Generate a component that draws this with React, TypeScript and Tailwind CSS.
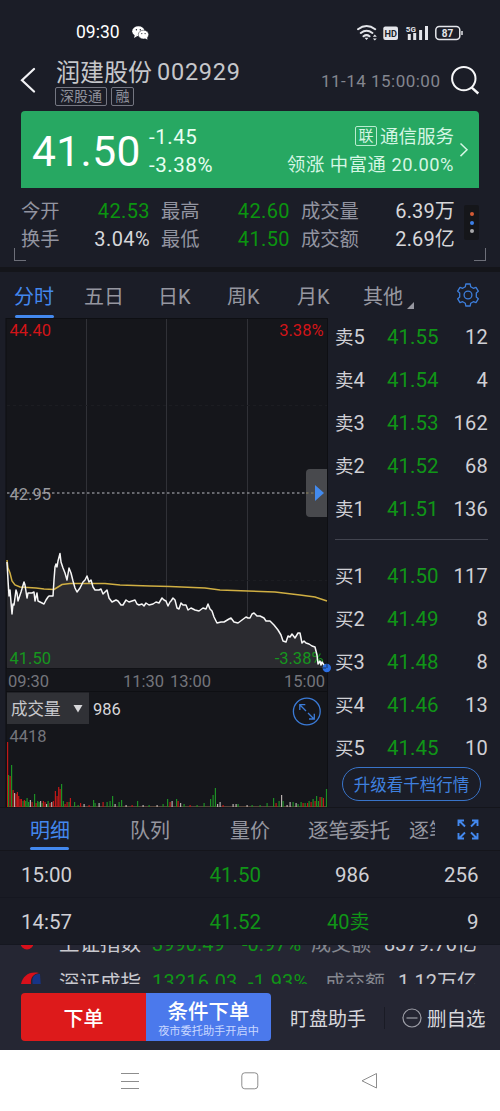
import React from "react";

const asks = [
  ["卖5", "41.55", "12"],
  ["卖4", "41.54", "4"],
  ["卖3", "41.53", "162"],
  ["卖2", "41.52", "68"],
  ["卖1", "41.51", "136"],
];
const bids = [
  ["买1", "41.50", "117"],
  ["买2", "41.49", "8"],
  ["买3", "41.48", "8"],
  ["买4", "41.46", "13"],
  ["买5", "41.45", "10"],
];

const pricePoints =
  "7,562 8,580 9,596 10,590 12,614 13,604 14,605 16,590 17,593 18,601 21,592 24,582 25,585 27,598 28,593 32,593 34,592 35,601 37,593 38,601 40,602 44,604 46,600 48,597 49,596 53,596 54,580 55,567 56,564 57,567 58,561 60,553.5 61,562 63,568 65,573 67,580 69,568 71,573 73,581 75,588 77,592 80,588 83,582 85,580 87,576 89,582 91,580 93,587 95,590 97,590 99,590 101,589 103,594 105,592 107,590 109,598 112,602 116,600 118,601 121,605 123,605 126,600 129,602 132,601 135,600 137,604 139,605 142,604 144,606 146,603 149,605 153,604 156,602 159,603 162,598 164,600 166,601 168,606 170,602 171,601 173,598 175,600 177,608 179,609 181,603 183,605 186,605 188,610 191,608 195,610 199,611 203,608 206,609 208,604 210,609 212,611 214,617 217,623 221,622 224,622 229,619 231,618 234,622 238,623 242,620 246,617 248,618 250,618 252,614 254,613 257,616 260,616 264,618 266,621 270,621 274,625 278,630 281,635 283,641 286,642 288,636 290,637 292,634 295,638 298,633 300,633 302,643 304,641 306,643 309,644 312,646 315,647 317,655 318,664 320,661 321,665 322,662 324,665 326,667 327,668";

const volPeaks: [number, number, string][] = [
  [7.5, 65, "r"], [8.5, 32, "g"], [10, 31, "r"], [11.5, 42, "g"], [13, 17, "r"], [14.5, 14, "w"], [16, 13, "r"],
  [17.3, 15, "r"], [18.6, 11, "r"], [20, 8, "r"], [21.3, 8, "r"], [23, 6, "g"], [24.3, 7, "r"], [25.6, 6, "g"],
  [27, 9, "g"], [28.5, 5, "g"], [30.3, 7, "w"], [32, 5, "r"], [34.5, 13, "g"], [36, 4, "r"], [37.6, 6, "g"],
  [39, 5, "g"], [40.5, 6, "w"], [42, 4, "g"], [43.3, 6, "r"], [45, 5, "r"], [46.5, 3, "w"], [48, 6, "g"],
  [50, 4, "r"], [51.6, 5, "w"], [53.3, 6, "r"], [55.3, 16, "r"], [57, 11, "r"], [58.6, 20, "r"], [60, 18, "r"],
  [61.5, 23, "g"], [63.3, 6, "g"], [65, 3, "r"], [67, 5, "r"], [69, 5, "g"], [70.3, 9, "r"], [74.5, 5, "g"],
  [78, 2, "g"], [80.5, 4, "r"], [84, 3, "w"], [89, 2, "r"], [93.5, 7, "g"], [95, 4, "g"], [99, 4, "w"],
  [103, 5, "r"], [107, 5, "g"], [110, 6, "g"], [112.5, 11, "g"], [115, 3, "w"], [119, 5, "g"], [121.5, 7, "g"],
  [126, 2, "w"], [132, 2, "r"], [137.5, 6, "g"], [143, 2, "w"], [149, 2, "g"], [157, 2, "w"], [163, 3, "g"],
  [167.5, 8, "g"], [170, 5, "r"], [172, 6, "w"], [176.5, 8, "g"], [178, 6, "r"], [180.5, 4, "w"], [184, 3, "g"],
  [190, 2, "r"], [197, 2, "g"], [204, 4, "g"], [210.5, 8, "g"], [213, 12, "g"], [215.3, 19, "g"], [217.5, 3, "w"],
  [220, 5, "w"], [223, 2, "r"], [233, 3, "w"], [236, 3, "w"], [238, 3, "g"], [247, 2, "w"], [252, 2, "g"],
  [260, 2, "g"], [267, 4, "g"], [273.5, 9, "g"], [276, 4, "r"], [279, 6, "g"], [281.5, 12, "w"], [283, 6, "g"],
  [287, 2, "w"], [290, 5, "w"], [293, 5, "g"], [296, 4, "w"], [298, 3, "g"], [301, 5, "g"], [303, 4, "r"],
  [305, 4, "g"], [307.5, 4, "r"], [309, 6, "g"], [311, 5, "r"], [313, 8, "g"], [315, 6, "r"], [316.5, 11, "g"],
  [318.3, 6, "g"], [320, 10, "r"], [321.7, 10, "g"], [323.3, 9, "r"], [326.4, 18, "g"],
];
const barColor: Record<string, string> = { r: "#c01818", g: "#1d8f25", w: "#b7b0ae" };

function StatusBar() {
  return (
    <div className="flex h-[50px] items-center pt-[16px] text-white">
      <span className="ml-[76px] w-[56px] text-[17.500px] leading-none">09:30</span>
      <svg className="h-[14px] w-[17px]" viewBox="0 0 17 14">
        <ellipse cx="6.4" cy="5.2" rx="6.2" ry="5" fill="#fff" />
        <path d="M2.8 8.5 2.1 12l3.2-2z" fill="#fff" />
        <ellipse cx="11.5" cy="8.6" rx="5.2" ry="4.4" fill="#fff" stroke="#1b1d27" strokeWidth=".5" />
        <path d="m13 12 2.4 1.7-.4-3z" fill="#fff" />
        <g fill="#1b1d27">
          <circle cx="4.4" cy="3.8" r=".7" /><circle cx="8.3" cy="3.8" r=".7" />
          <circle cx="9.8" cy="7.6" r=".6" /><circle cx="13.1" cy="7.6" r=".6" />
        </g>
      </svg>
      <svg className="ml-[207px] h-[18px] w-[108px]" viewBox="356 24 108 18" fill="none">
        <g stroke="#e4e5ea" strokeWidth="2" strokeLinecap="round">
          <path d="M358 29.200q8.600-6.500 17.200 0M360.800 33q5.800-4.500 11.600 0M363.500 36.300q3-2.300 6 0" />
        </g>
        <path d="m366.500 40-2-2.200h4zM374.800 34.500l2 2.300h-4zM374.800 40.500l2-2h-4z" fill="#e4e5ea" />
        <rect x="383.300" y="26.500" width="14.700" height="13.500" rx="2" fill="#e4e5ea" />
        <text x="390.700" y="36.600" fontSize="9.200" fontWeight="700" textAnchor="middle" fill="#1b1d27">HD</text>
        <text x="405.800" y="31.500" fontSize="8" fontWeight="700" fill="#e4e5ea">5G</text>
        <path d="M409.300 34V40M414.700 33V40M420.600 30V40M426.500 26V40" stroke="#e4e5ea" strokeWidth="3" />
        <rect x="435.800" y="26.500" width="24" height="13" rx="3.500" stroke="#e4e5ea" strokeWidth="1.500" />
        <path d="M462 31v4" stroke="#e4e5ea" strokeWidth="1.500" />
        <text x="447.600" y="36.600" fontSize="10" fontWeight="700" textAnchor="middle" fill="#e4e5ea">87</text>
      </svg>
    </div>
  );
}

function Header() {
  return (
    <header className="flex h-[61px] pl-[20px]">
      <svg className="mt-[17px] h-[26px] w-[16px]" viewBox="0 0 16 26" fill="none">
        <path d="M14 2 2 13.200 14 24.500" stroke="#f2f2f5" strokeWidth="2.200" strokeLinecap="round" />
      </svg>
      <div className="ml-[19px] w-[266px]">
        <div className="mt-[9px] flex h-[26px] items-center whitespace-nowrap pl-[1px] text-[24px] leading-[26px] text-[#c6c7cb]">
          <span className="w-[101px] pt-[2px]">润建股份</span>
          <span className="text-[23.500px] tracking-[0.750px]">002929</span>
        </div>
        <div className="mt-[2px] flex gap-[4px] text-[14px] leading-[17px] text-[#90929c]">
          <span className="flex h-[19px] w-[52px] items-center justify-center rounded-[2px] border border-[#747681]">深股通</span>
          <span className="flex h-[19px] w-[23px] items-center justify-center rounded-[2px] border border-[#747681]">融</span>
        </div>
      </div>
      <span className="mt-[21px] w-[130px] whitespace-nowrap text-[17px] leading-[20px] tracking-[0.480px] text-[#84868f]">11-14 15:00:00</span>
      <svg className="mt-[15px] h-[30px] w-[30px]" viewBox="0 0 30 30" fill="none" stroke="#f7f7f9">
        <circle cx="12.800" cy="13.600" r="11.700" strokeWidth="2" />
        <path d="m20.500 22.300 6.800 6.200" strokeWidth="2.400" />
      </svg>
    </header>
  );
}

function QuoteCard() {
  return (
    <section className="mx-[21px] flex h-[77px] rounded-t-[4px] bg-[#27a862] text-white">
      <span className="w-[128px] pl-[11px] pt-[16px] text-[42.500px] leading-[50px] tracking-[0.400px]">41.50</span>
      <div className="flex w-[100px] flex-col pt-[12px] text-[20.500px] leading-[28px] tracking-[0.550px] text-[#e7fff2]">
        <span>-1.45</span>
        <span>-3.38%</span>
      </div>
      <div className="flex w-[205px] flex-col items-end whitespace-nowrap pt-[12px] text-[18px] leading-[28px] text-[#d5f6e4]">
        <span className="flex h-[28px] items-center gap-[3px]">
          <i className="-mt-[2px] flex h-[20px] w-[22px] items-center justify-center rounded-[2px] border border-[#b9ecd0] text-[15px] not-italic leading-none">联</i>
          <span className="text-[18.500px]">通信服务</span>
        </span>
        <span className="text-[18.300px] tracking-[0.550px]">领涨 中富通 20.00%</span>
      </div>
      <svg className="ml-[5px] mt-[31px] h-[16px] w-[10px]" viewBox="0 0 10 16" fill="none">
        <path d="m1.500 1.500 6.500 6.300-6.500 6.300" stroke="#d5f6e4" strokeWidth="1.500" />
      </svg>
    </section>
  );
}

function Stats() {
  const rows = [
    ["今开", "42.53", "最高", "42.60", "成交量", "6.39万"],
    ["换手", "3.04%", "最低", "41.50", "成交额", "2.69亿"],
  ];
  return (
    <section className="relative flex h-[79px] pl-[21px] pt-[9px]">
      <div className="w-[434px] text-[19.300px] leading-[28px] text-[#9294a0]">
        {rows.map((r, i) => (
          <div key={r[0]} className="flex h-[28px] whitespace-nowrap">
            <span className="w-[56px] pt-[1px]">{r[0]}</span>
            <span className={`w-[73px] text-right text-[20px] tracking-[0.400px] ${i ? "text-[#d7d7da]" : "text-[#0b9410]"}`}>{r[1]}</span>
            <span className="ml-[11px] w-[56px] pt-[1px]">{r[2]}</span>
            <span className="w-[73px] text-right text-[20px] tracking-[0.400px] text-[#0b9410]">{r[3]}</span>
            <span className="ml-[11px] w-[74px] pt-[1px]">{r[4]}</span>
            <span className="w-[80px] text-right text-[20px] tracking-[0.150px] text-[#d7d7da]">{r[5]}</span>
          </div>
        ))}
      </div>
      <div className="ml-[9px] mt-[8px] flex h-[35px] w-[15px] flex-col items-center justify-center gap-[4.500px] rounded-[2px] bg-[#15161a]">
        <i className="h-[4px] w-[4px] rounded-full bg-[#d45a35]" />
        <i className="h-[4px] w-[4px] rounded-full bg-[#3c80e8]" />
        <i className="h-[4px] w-[4px] rounded-full bg-[#a8a8aa]" />
      </div>
      <i className="absolute bottom-[6px] left-[14px] h-[13px] w-[12px] border-b border-l border-[#6d6f79]" />
      <i className="absolute bottom-[6px] right-[14px] h-[13px] w-[12px] border-b border-r border-[#6d6f79]" />
    </section>
  );
}

function PeriodTabs() {
  return (
    <nav className="flex h-[51px] whitespace-nowrap border-t-[5px] border-[#14151a] pl-[14px] text-[20px] leading-[50px] text-[#9697a0]">
      <div className="flex w-[70px] flex-col justify-between text-[#4388ee]">
        <span className="h-[43px]">分时</span>
        <i className="ml-[1px] h-[3px] w-[39px] rounded-full bg-[#4388ee]" />
      </div>
      <span className="w-[74px]">五日</span>
      <span className="w-[69px]">日K</span>
      <span className="w-[70px]">周K</span>
      <span className="w-[66px]">月K</span>
      <span className="flex w-[93px]">
        其他
        <svg className="ml-[4px] mt-[30px] h-[7px] w-[7px]" viewBox="0 0 7 7"><path d="M7 0v7H0z" fill="#9697a0" /></svg>
      </span>
      <svg className="mt-[11px] h-[24px] w-[24px]" viewBox="0 0 24 24" fill="none" stroke="#3d7edb" strokeWidth="1.300" strokeLinejoin="round">
        <path d="M9.300 3.800 9.800 1h4.400l.5 2.800 2.600 1.500 2.700-1 2.300 3.900-2 1.800v4l2 1.800-2.300 3.900-2.700-1-2.600 1.500-.5 2.800H9.800l-.5-2.800-2.600-1.500-2.700 1-2.300-3.900 2-1.800v-4l-2-1.800L4 4.300l2.700 1z" />
        <circle cx="12" cy="12" r="3.900" />
      </svg>
    </nav>
  );
}

function PriceChart() {
  return (
    <svg className="block h-[489px] w-[331px]" viewBox="0 318 331 489" fill="none">
      <rect x="6" y="318" width="322" height="489" fill="#15161b" />
      <path d="M6 318V807M327.500 318V807M6 318.500H328M6 668H328M6 691.500H328" stroke="#0e0f13" />
      <path d="M86.500 319V668M166.500 319V668M247.500 319V668" stroke="#303137" />
      <path d="M7 405.500H327M7 580.500H327" stroke="#1c1d22" strokeDasharray="3 3" />
      <polygon points={`${pricePoints} 7,668`} fill="#2b2b30" />
      <path d="M7 493H306" stroke="#83848a" strokeWidth="1.300" strokeDasharray="2.500 2.500" />
      <g fontSize="16.500">
        <text x="9.500" y="336" fill="#d11418">44.40</text>
        <text x="323.500" y="336" fill="#d11418" textAnchor="end">3.38%</text>
        <text x="9.500" y="500" fill="#9a9ba0">42.95</text>
        <text x="9.500" y="664" fill="#16961e">41.50</text>
        <text x="323.500" y="664" fill="#16961e" textAnchor="end">-3.38%</text>
        <g fill="#74757b">
          <text x="8" y="687">09:30</text>
          <text x="123" y="687">11:30</text>
          <text x="170" y="687">13:00</text>
          <text x="325" y="687" textAnchor="end">15:00</text>
        </g>
      </g>
      <polyline
        points="7,560 8,568 10,573 12,581 15,585 20,587 28,587.500 36,588 44,589 54,589.500 58,587 62,584.500 70,583.500 86,583.500 105,583.500 120,585 150,586 170,586.500 205,588 220,590 248,591 275,592 300,595 315,597 327,601"
        stroke="#d0af43" strokeWidth="1.500"
      />
      <polyline points={pricePoints} stroke="#f7f7f7" strokeWidth="1.500" strokeLinejoin="round" />
      <path d="M327 469H310a4 4 0 0 0-4 4V513a4 4 0 0 0 4 4H327z" fill="#48494d" />
      <path d="M306 493H314" stroke="#91875f" strokeDasharray="2.500 2.500" />
      <path d="m315 485 9 8-9 8z" fill="#438bef" />
      <circle cx="326.800" cy="668" r="4.200" fill="#2c6fe4" />
      <path d="M323 668H326M327 664V668" stroke="#1c3158" />
      <rect x="7" y="692.500" width="82" height="31.500" fill="#303136" />
      <text x="11" y="714.500" fontSize="16.500" fill="#c8c8cc">成交量</text>
      <path d="M73.500 705h9l-4.500 7.500z" fill="#d7d7da" />
      <text x="93" y="714.500" fontSize="16.500" fill="#d7d7da">986</text>
      <text x="9.500" y="742" fontSize="16.500" fill="#74757b">4418</text>
      <g stroke="#3b7bd7" strokeWidth="1.300">
        <circle cx="306.800" cy="711.500" r="13.400" />
        <path d="m300 705 6 6M308 713l6 6M299.800 710v-5.300h5.500M309 719h5.300v-5.300" />
      </g>
      <path d="M7 806.500H327" stroke="#57443b" />
      {volPeaks.map(([x, h, c]) => (
        <rect key={x} x={x - 0.5} y={807 - h} width="1.200" height={h} fill={barColor[c]} />
      ))}
    </svg>
  );
}

function Level({ row }: { row: string[] }) {
  return (
    <div className="flex h-[43px] whitespace-nowrap text-[20px] leading-[43px] text-[#d0d0d5]">
      <span className="w-[48px] text-[18.500px]">{row[0].slice(0, 1)}<span className="text-[20px]">{row[0].slice(1)}</span></span>
      <span className="w-[56px] pl-[4px] text-[20.500px] text-[#109517]">{row[1]}</span>
      <span className="w-[49px] text-right tracking-[0.300px]">{row[2]}</span>
    </div>
  );
}

function OrderBook() {
  return (
    <aside className="h-[489px] w-[169px] pl-[4px]">
      <div className="-mt-[2px] h-[223px]">{asks.map((r) => <Level key={r[0]} row={r} />)}</div>
      <div className="h-[16px] w-[153px] border-t border-[#42444f]" />
      {bids.map((r) => <Level key={r[0]} row={r} />)}
      <div className="ml-[7px] -mt-[3px] flex h-[34px] w-[139px] items-center justify-center rounded-full border border-[#3974c9] pt-[4px] text-[16.500px] leading-none text-[#3f80df]">升级看千档行情</div>
    </aside>
  );
}

function DetailTabs() {
  return (
    <nav className="flex h-[44px] whitespace-nowrap border-y border-[#14151b] pl-[30px] text-[20px] leading-[47px] text-[#9697a0]">
      <div className="flex w-[100px] flex-col text-[#4388ee]">
        <span className="h-[39px]">明细</span>
        <i className="h-[3px] w-[39px] rounded-full bg-[#4388ee]" />
      </div>
      <span className="w-[100px]">队列</span>
      <span className="w-[78px]">量价</span>
      <span className="w-[101px] text-[20.500px]">逐笔委托</span>
      <span className="w-[26px] overflow-hidden">逐笔</span>
      <svg className="ml-[22px] mt-[11px] h-[21px] w-[22px]" viewBox="0 0 22 21" fill="none" stroke="#4388ee" strokeWidth="1.900">
        <path d="M8 7.500 2 1.500M1.500 7V1.500H7M14 7.500l6-6M15 1.500h5.500V7M8 13.500l-6 6M1.500 14v5.500H7M14 13.500l6 6M15 19.500h5.500V14" />
      </svg>
    </nav>
  );
}

function Trades() {
  const rows = [
    ["15:00", "41.50", "986", "256"],
    ["14:57", "41.52", "40卖", "9"],
  ];
  return (
    <div className="bg-[#191b24]">
      {rows.map((r, i) => (
        <div key={r[0]} className="flex h-[47px] whitespace-nowrap border-b border-[#151720] pl-[21px] text-[20.500px] leading-[48px] text-[#d0d0d5]">
          <span className="w-[140px]">{r[0]}</span>
          <span className="w-[100px] text-right text-[#109517]">{r[1]}</span>
          <span className={`w-[108.500px] text-right ${i ? "text-[20px] text-[#109517]" : ""}`}>{r[2]}</span>
          <span className="w-[109px] text-right">{r[3]}</span>
        </div>
      ))}
    </div>
  );
}

function IndexTicker() {
  return (
    <div className="h-[39px] overflow-hidden whitespace-nowrap text-[20px] leading-[36px] text-[#c9c9cf]">
      <div className="-mt-[19px] flex h-[38px] pl-[21px]">
        <svg className="mt-[10px] h-[14px] w-[12px]" viewBox="0 0 12 14"><circle cx="6" cy="7" r="6.500" fill="#d7101b" /></svg>
        <span className="ml-[26px] w-[93px] text-[20.500px]">上证指数</span>
        <span className="w-[90px] text-[#109517]">3990.49</span>
        <span className="w-[69px] text-[#109517]">-0.97%</span>
        <span className="w-[73px] text-[#84868f]">成交额</span>
        <span>8379.76亿</span>
      </div>
      <div className="flex h-[36px] pl-[21px]">
        <svg className="mt-[8px] h-[18px] w-[20px]" viewBox="0 0 20 18">
          <path d="M0 12C2 4 8-1 18 1 11 2 8 8 11 16L0 14z" fill="#d7101b" />
          <path d="M19 2C13 2 10 5 12 14l8 2z" fill="#173486" />
        </svg>
        <span className="ml-[18px] w-[93px] pt-[1px] text-[20.500px]">深证成指</span>
        <span className="w-[96px] tracking-[0.200px] text-[#109517]">13216.03</span>
        <span className="w-[77px] tracking-[0.200px] text-[#109517]">-1.93%</span>
        <span className="w-[73px] pt-[1px] text-[#84868f]">成交额</span>
        <span>1.12万亿</span>
      </div>
    </div>
  );
}

function ActionBar() {
  return (
    <div className="flex h-[66px] whitespace-nowrap pl-[21px] pt-[9px] text-[20px] text-[#d7d7dc]">
      <div className="flex h-[48px] w-[125px] items-center justify-center rounded-l-[4px] bg-[#dd1a1b] pt-[3px] font-medium leading-none text-white">下单</div>
      <div className="flex h-[48px] w-[125px] flex-col items-center rounded-r-[4px] bg-[#4b79ec] pt-[6px] text-white">
        <span className="text-[20.500px] font-medium leading-[26px]">条件下单</span>
        <span className="text-[11.200px] leading-[14px] text-[#c8d7ff]">夜市委托助手开启中</span>
      </div>
      <span className="ml-[19px] w-[94px] text-[19px] leading-[53px]">盯盘助手</span>
      <i className="mt-[14px] h-[22px] w-px bg-[#1a1b25]" />
      <svg className="ml-[17px] mt-[15px] h-[20px] w-[20px]" viewBox="0 0 20 20" fill="none" stroke="#9d9ea7" strokeWidth="1.200">
        <circle cx="10" cy="10" r="9" /><path d="M4.500 10h11" />
      </svg>
      <span className="ml-[5px] text-[19.500px] leading-[53px]">删自选</span>
    </div>
  );
}

export default function App() {
  return (
    <main className="h-[1111px] w-[500px] overflow-hidden bg-[#1b1d27] font-['Roboto','Noto_Sans_CJK_SC',sans-serif]">
      <StatusBar />
      <Header />
      <QuoteCard />
      <Stats />
      <PeriodTabs />
      <div className="flex h-[489px]">
        <PriceChart />
        <OrderBook />
      </div>
      <DetailTabs />
      <Trades />
      <div className="h-[105px] bg-[#252633]">
        <IndexTicker />
        <ActionBar />
      </div>
      <footer className="flex h-[61px] items-center justify-between bg-white px-[121px]">
        <svg className="h-[18px] w-[18px]" viewBox="0 0 18 18" stroke="#8d8d8d"><path d="M0 1.500h18M0 9.500h18M0 16.500h18" /></svg>
        <svg className="h-[18px] w-[18px]" viewBox="0 0 18 18" fill="none" stroke="#8d8d8d"><rect x=".8" y=".8" width="16" height="16" rx="3" /></svg>
        <svg className="h-[18px] w-[18px]" viewBox="0 0 18 18" fill="none" stroke="#8d8d8d" strokeLinejoin="round"><path d="M15.500 1.500v14.500L1 8.800z" /></svg>
      </footer>
    </main>
  );
}
